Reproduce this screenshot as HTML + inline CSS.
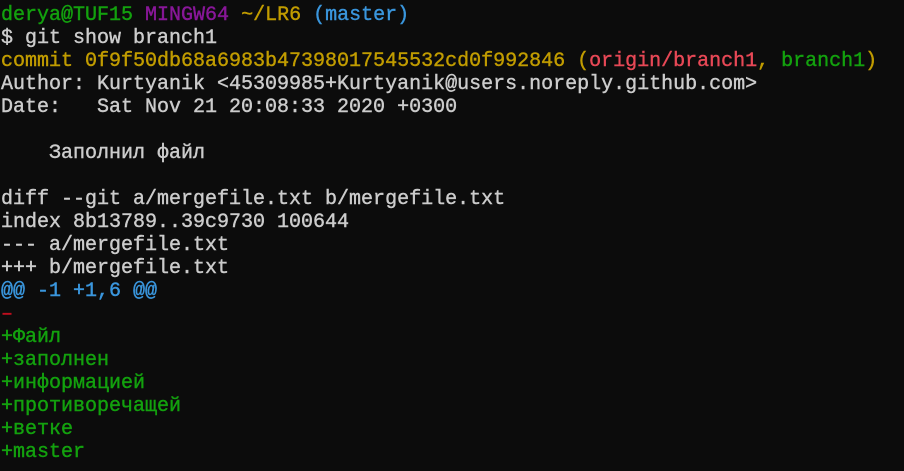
<!DOCTYPE html>
<html><head><meta charset="utf-8"><style>
html,body{margin:0;padding:0;background:#0c0c0c;width:904px;height:471px;overflow:hidden}
pre{margin:0;padding:4px 0 0 1px;font-family:"Liberation Mono","DejaVu Sans Mono",monospace;font-size:20px;line-height:23px;color:#cccccc;white-space:pre;-webkit-text-stroke:0.4px currentColor}
.g{color:#13a10e}.p{color:#881798}.y{color:#c19c00}.b{color:#3a96dd}.r{color:#e74856}.rd{color:#c50f1f}
</style></head><body><pre><span class="g">derya@TUF15</span> <span class="p">MINGW64</span> <span class="y">~/LR6</span> <span class="b">(master)</span>
$ git show branch1
<span class="y">commit 0f9f50db68a6983b47398017545532cd0f992846 (</span><span class="r">origin/branch1</span><span class="y">, </span><span class="g">branch1</span><span class="y">)</span>
Author: Kurtyanik &lt;45309985+Kurtyanik@users.noreply.github.com&gt;
Date:   Sat Nov 21 20:08:33 2020 +0300

    Заполнил файл

diff --git a/mergefile.txt b/mergefile.txt
index 8b13789..39c9730 100644
--- a/mergefile.txt
+++ b/mergefile.txt
<span class="b">@@ -1 +1,6 @@</span>
<span class="rd">–</span>
<span class="g">+Файл</span>
<span class="g">+заполнен</span>
<span class="g">+информацией</span>
<span class="g">+противоречащей</span>
<span class="g">+ветке</span>
<span class="g">+master</span></pre></body></html>
